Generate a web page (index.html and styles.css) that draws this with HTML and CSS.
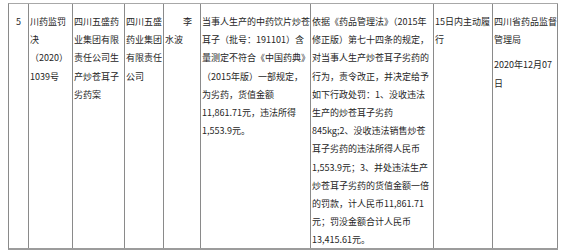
FILE: index.html
```html
<!DOCTYPE html>
<html lang="zh-CN">
<head>
<meta charset="utf-8">
<title>行政处罚信息</title>
<link rel="stylesheet" href="styles.css">
</head>
<body>
<div class="record">
  <div class="cell num">5</div>
  <div class="cell">川药监罚<br>决<br>（2020）<br>1039号</div>
  <div class="cell">四川五盛药<br>业集团有限<br>责任公司生<br>产炒苍耳子<br>劣药案</div>
  <div class="cell">四川五盛<br>药业集团<br>有限责任<br>公司</div>
  <div class="cell indent">李<br>水波</div>
  <div class="cell">当事人生产的中药饮片炒苍<br>耳子（批号：191101）含<br>量测定不符合《中国药典》<br>（2015年版）一部规定，<br>为劣药，货值金额<br>11,861.71元，违法所得<br>1,553.9元。</div>
  <div class="cell">依据《药品管理法》（2015年<br>修正版）第七十四条的规定，<br>对当事人生产炒苍耳子劣药的<br>行为，责令改正，并决定给予<br>如下行政处罚：1、没收违法<br>生产的炒苍耳子劣药<br>845kg;2、没收违法销售炒苍<br>耳子劣药的违法所得人民币<br>1,553.9元；3、并处违法生产<br>炒苍耳子劣药的货值金额一倍<br>的罚款，计人民币11,861.71<br>元；罚没金额合计人民币<br>13,415.61元。</div>
  <div class="cell">15日内主动履<br>行</div>
  <div class="cell">
    <p class="para">四川省药品监督<br>管理局</p>
    <p class="para">2020年12月07<br>日</p>
  </div>
</div>
</body>
</html>
```

FILE: styles.css
```css
body {
  margin: 0;
  background: #ffffff;
  font-family: "Noto Sans CJK SC", "Noto Sans", sans-serif;
  font-size: 9px;
  line-height: 18.2px;
  color: #262626;
}

.record {
  display: grid;
  grid-template-columns: 20px 44px 52px 39px 37px 110px 123px 59px 65px;
  grid-template-rows: 244px;
  width: fit-content;
  margin: 3px 0 0 8px;
  border-top: 1px solid #a8a8a8;
  border-bottom: 2px solid #9c9c9c;
  border-left: 1px solid #8a8a8a;
}

.cell {
  box-sizing: border-box;
  border-right: 1px solid #8a8a8a;
  padding: 9px 0 0 1px;
  white-space: nowrap;
}

.num {
  text-align: center;
  padding-left: 0;
}

.indent {
  text-indent: 2em;
}

.para {
  margin: 0;
}

.para + .para {
  margin-top: 7px;
}
```
